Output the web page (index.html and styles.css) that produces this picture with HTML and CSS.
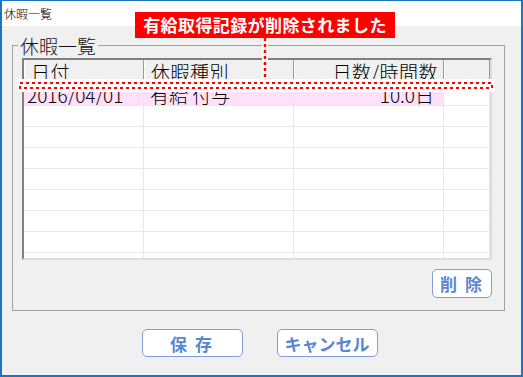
FILE: index.html
```html
<!DOCTYPE html>
<html lang="ja">
<head>
    <meta charset="UTF-8">
    <title>休暇一覧</title>
    <link rel="stylesheet" href="styles.css">
</head>
<body>
    <div class="window">
        <div class="titlebar">休暇一覧</div>

        <div class="client">
            <fieldset class="group">
                <legend>休暇一覧</legend>

                <div class="list">
                    <table>
                        <colgroup>
                            <col class="col-date">
                            <col class="col-type">
                            <col class="col-days">
                            <col>
                        </colgroup>
                        <thead>
                            <tr>
                                <th>日付</th>
                                <th>休暇種別</th>
                                <th class="num">日数/時間数</th>
                                <th></th>
                            </tr>
                        </thead>
                        <tbody>
                            <tr class="selected">
                                <td class="date">2016/04/01</td>
                                <td>有給 付与</td>
                                <td class="num">10.0日</td>
                                <td></td>
                            </tr>
                            <tr><td></td><td></td><td></td><td></td></tr>
                            <tr><td></td><td></td><td></td><td></td></tr>
                            <tr><td></td><td></td><td></td><td></td></tr>
                            <tr><td></td><td></td><td></td><td></td></tr>
                            <tr><td></td><td></td><td></td><td></td></tr>
                            <tr><td></td><td></td><td></td><td></td></tr>
                            <tr><td></td><td></td><td></td><td></td></tr>
                            <tr><td></td><td></td><td></td><td></td></tr>
                        </tbody>
                    </table>
                </div>

                <div class="group-actions">
                    <button class="btn btn-small">削 除</button>
                </div>
            </fieldset>

            <div class="footer">
                <button class="btn">保 存</button>
                <button class="btn">キャンセル</button>
            </div>
        </div>

        <!-- annotation: message balloon pointing at the removed row -->
        <div class="callout">有給取得記録が削除されました</div>
        <svg class="marker" width="523" height="377" viewBox="0 0 523 377">
            <rect x="262" y="38" width="6" height="42" fill="#fff"/>
            <line x1="265" y1="38" x2="265" y2="80" stroke="#f00" stroke-width="2.5" stroke-dasharray="3 3"/>
            <rect x="17" y="79" width="478" height="13" fill="#fff"/>
            <rect x="20" y="83" width="472" height="5" fill="#fff" stroke="#f00" stroke-width="2" stroke-dasharray="3 3"/>
        </svg>
    </div>
</body>
</html>
```

FILE: styles.css
```css
* {
    margin: 0;
    padding: 0;
    box-sizing: border-box;
}

body {
    font-family: 'Noto Sans CJK JP', sans-serif;
    background: #fff;
    color: #000;
}

.window {
    position: relative;
    width: 523px;
    height: 377px;
    border: 2px solid #1c74c4;
    border-top-width: 1px;
    background: #f0f0f0;
    display: flex;
    flex-direction: column;
}

.titlebar {
    height: 25px;
    background: #fff;
    font-size: 12px;
    font-weight: 300;
    line-height: 25px;
    padding-left: 2px;
}

.client {
    flex: 1;
    padding: 9px 16px 0 10px;
}

/* group box */
.group {
    border: 1px solid #a0a0a0;
    padding: 2px 0 12px 0;
}

.group legend {
    margin-left: 5px;
    padding: 0 2px;
    font-size: 19px;
    font-weight: 300;
    line-height: 21px;
    color: #111;
}

.list {
    margin: 0 12px 0 9px;
    height: 202px;
    overflow: hidden;
    background: #fff;
    border: 2px solid;
    border-color: #808080 #dcdcdc #dcdcdc #808080;
}

.list table {
    width: 100%;
    table-layout: fixed;
    border-collapse: separate;
    border-spacing: 0;
    font-size: 19px;
    font-weight: 300;
}

.col-date { width: 120px; }
.col-type { width: 150px; }
.col-days { width: 150px; }

.list th {
    height: 25px;
    background: #f0f0f0;
    font-weight: 300;
    text-align: left;
    padding: 0 5px 0 7px;
    line-height: 24px;
    border-right: 1px solid #9a9a9a;
    border-bottom: 1px solid #a0a0a0;
    box-shadow: inset 1px 0 0 #fff;
    white-space: nowrap;
    letter-spacing: 0.5px;
}

.list td {
    height: 21px;
    padding: 0 9px 0 6px;
    line-height: 20px;
    border-right: 1px solid #e8e8e8;
    border-bottom: 1px solid #e8e8e8;
    white-space: nowrap;
    overflow: hidden;
}

.list td.date {
    padding-left: 3px;
}

.list .num {
    text-align: right;
}

.list tr.selected td:not(:last-child) {
    background: #ffe0fa;
}

.group-actions {
    display: flex;
    justify-content: flex-end;
    margin: 9px 12px 0 0;
}

.btn {
    width: 101px;
    height: 28px;
    background: #fff;
    border: 1px solid #7f9ed6;
    border-radius: 5px;
    color: #5a87d3;
    font-family: 'Noto Sans CJK JP', sans-serif;
    font-weight: bold;
    font-size: 17px;
    letter-spacing: 2px;
    cursor: pointer;
}

.btn-small {
    width: 60px;
    height: 29px;
}

.footer {
    display: flex;
    justify-content: center;
    gap: 34px;
    margin-top: 18px;
    padding-left: 2px;
}

.footer .btn:last-child {
    letter-spacing: 0;
}

/* annotation layer */
.callout {
    position: absolute;
    left: 133px;
    top: 11px;
    width: 260px;
    height: 26px;
    background: #f00;
    color: #fff;
    font-weight: bold;
    font-size: 17px;
    line-height: 26px;
    text-align: center;
    letter-spacing: 0.4px;
}

.marker {
    position: absolute;
    left: -2px;
    top: -1px;
    pointer-events: none;
}
```
